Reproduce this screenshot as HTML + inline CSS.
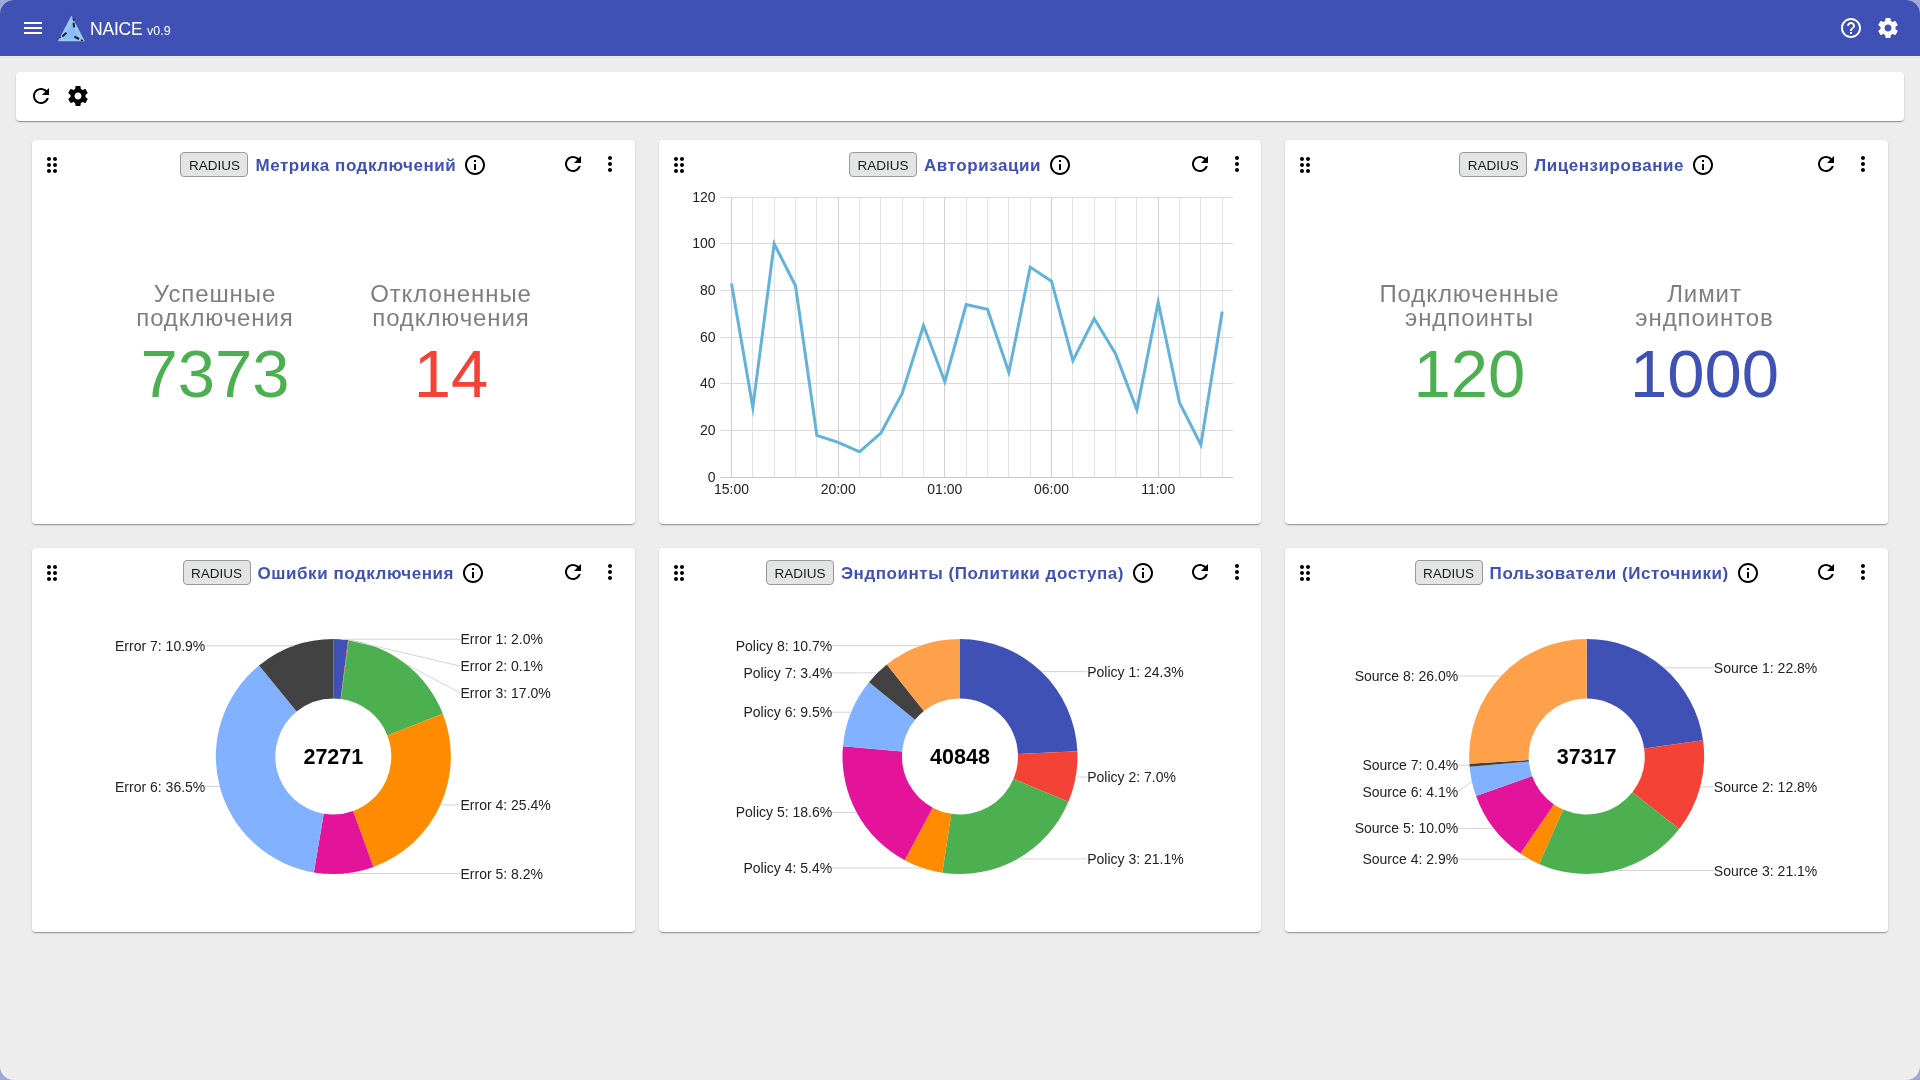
<!DOCTYPE html>
<html><head><meta charset="utf-8"><title>NAICE</title><style>
*{box-sizing:border-box}
html,body{margin:0;padding:0;width:1920px;height:1080px;overflow:hidden;background:#a0a9d6}
.win{position:absolute;left:0;top:0;width:1920px;height:1080px;background:#ededed;will-change:transform;border-radius:14px;overflow:hidden;font-family:"Liberation Sans",sans-serif}
.hdr{position:absolute;left:0;top:0;width:1920px;height:56px;background:#3f51b5}
.ic{position:absolute;display:block}
.t{position:absolute;white-space:nowrap;font-family:"Liberation Sans",sans-serif}
.card{position:absolute;background:#fff;border-radius:4px;box-shadow:0 2px 1px -1px rgba(0,0,0,.2),0 1px 1px 0 rgba(0,0,0,.14),0 1px 3px 0 rgba(0,0,0,.12)}
.hg{position:absolute;height:26px;display:flex;align-items:flex-start;justify-content:center}
.chip{display:inline-block;height:25px;width:68px;text-align:center;line-height:25px;padding:0;border:1px solid #9a9a9a;border-radius:4px;background:#e3e4e4;color:#1a1a1a;font-size:13.5px;flex:none}
.ttl{margin-left:7px;line-height:26px;padding-top:1px;font-weight:700;font-size:17px;letter-spacing:.55px;color:#3f51b5;white-space:nowrap}
.mlab{text-align:center;font-size:24px;line-height:24.3px;color:#7f7f7f;letter-spacing:.9px}
.mnum{text-align:center;font-size:67px;line-height:70px}
.ax{font-family:"Liberation Sans",sans-serif;font-size:14px;fill:#222}
.pl{font-family:"Liberation Sans",sans-serif;font-size:14px;fill:#222}
.pt{font-family:"Liberation Sans",sans-serif;font-size:21.5px;font-weight:700;fill:#000}
</style></head>
<body><div class="win">
<div class="hdr"></div><div style="position:absolute;left:0;top:57px;width:1920px;height:1px;background:repeating-linear-gradient(90deg,#e2e3e3 0 1px,#ececec 1px 2px)"></div>
<svg class="ic" style="left:21px;top:16px;width:24px;height:24px" viewBox="0 0 24 24"><path fill="#fff" d="M3 18h18v-2H3v2zm0-5h18v-2H3v2zm0-7v2h18V6H3z"/></svg>
<svg class="ic" style="left:56px;top:14px;width:31px;height:30px" viewBox="0 0 31 30">
<polygon points="15.4,1.6 28.9,27.2 1.9,27.2" fill="#96c8f2"/>
<polygon points="15.6,9 23.5,25 8,25" fill="#86b6fb" opacity="0.7"/>
<path d="M17.4,4.2 L17.6,6.8" stroke="#1c1c28" stroke-width="1.5"/>
<path d="M17.6,8.6 L18.1,13.4" stroke="#1c1c28" stroke-width="2"/>
<path d="M3.6,23.8 L4.6,22.8" stroke="#1c1c28" stroke-width="1.5"/>
<path d="M6.4,22.4 L10.4,18.8" stroke="#1c1c28" stroke-width="2"/>
<path d="M18.4,22.6 L23,25" stroke="#1c1c28" stroke-width="2"/>
<path d="M24.8,26 L27,26.6" stroke="#1c1c28" stroke-width="1.5"/>
</svg>
<div class="t" style="left:90px;top:19px;font-size:17.5px;letter-spacing:-0.2px;color:#fff;line-height:20px">NAICE</div>
<div class="t" style="left:147px;top:24px;font-size:12.5px;color:#fff;line-height:14px">v0.9</div>
<svg class="ic" style="left:1839px;top:16px;width:24px;height:24px" viewBox="0 0 24 24"><path fill="#fff" d="M11 18h2v-2h-2v2zm1-16C6.48 2 2 6.48 2 12s4.48 10 10 10 10-4.48 10-10S17.52 2 12 2zm0 18c-4.41 0-8-3.59-8-8s3.59-8 8-8 8 3.59 8 8-3.59 8-8 8zm0-14c-2.21 0-4 1.79-4 4h2c0-1.1.9-2 2-2s2 .9 2 2c0 2-3 1.75-3 5h2c0-2.25 3-2.5 3-5 0-2.21-1.79-4-4-4z"/></svg>
<svg class="ic" style="left:1876px;top:16px;width:24px;height:24px" viewBox="0 0 24 24"><path fill="#fff" d="M19.43 12.98c.04-.32.07-.64.07-.98s-.03-.66-.07-.98l2.11-1.65c.19-.15.24-.42.12-.64l-2-3.46c-.12-.22-.39-.3-.61-.22l-2.49 1c-.52-.4-1.08-.73-1.69-.98l-.38-2.65C14.46 2.18 14.25 2 14 2h-4c-.25 0-.46.18-.49.42l-.38 2.650c-.61.25-1.17.59-1.69.98l-2.49-1c-.23-.09-.49 0-.61.22l-2 3.46c-.13.22-.07.49.12.64l2.11 1.65c-.04.32-.07.65-.07.98s.03.66.07.98l-2.11 1.65c-.19.15-.24.42-.12.64l2 3.46c.12.22.39.3.61.22l2.49-1c.52.4 1.08.73 1.69.98l.38 2.65c.03.24.24.42.49.42h4c.25 0 .46-.18.49-.42l.38-2.65c.61-.25 1.17-.59 1.69-.98l2.49 1c.23.09.49 0 .61-.22l2-3.46c.12-.22.07-.49-.12-.64l-2.11-1.65zM12 15.5c-1.93 0-3.5-1.57-3.5-3.5s1.57-3.5 3.5-3.5 3.5 1.57 3.5 3.5-1.57 3.5-3.5 3.5z"/></svg>
<div class="card" style="left:16px;top:72px;width:1888px;height:49px"></div>
<svg class="ic" style="left:29px;top:84px;width:24px;height:24px" viewBox="0 0 24 24"><path fill="#000" d="M17.65 6.35C16.2 4.9 14.21 4 12 4c-4.42 0-7.99 3.58-7.99 8s3.57 8 7.99 8c3.73 0 6.840-2.55 7.73-6h-2.08c-.82 2.33-3.04 4-5.65 4-3.31 0-6-2.69-6-6s2.69-6 6-6c1.66 0 3.14.69 4.22 1.78L13 11h7V4l-2.35 2.35z"/></svg>
<svg class="ic" style="left:66px;top:84px;width:24px;height:24px" viewBox="0 0 24 24"><path fill="#000" d="M19.43 12.98c.04-.32.07-.64.07-.98s-.03-.66-.07-.98l2.11-1.65c.19-.15.24-.42.12-.64l-2-3.46c-.12-.22-.39-.3-.61-.22l-2.49 1c-.52-.4-1.08-.73-1.69-.98l-.38-2.65C14.46 2.18 14.25 2 14 2h-4c-.25 0-.46.18-.49.42l-.38 2.650c-.61.25-1.17.59-1.69.98l-2.49-1c-.23-.09-.49 0-.61.22l-2 3.46c-.13.22-.07.49.12.64l2.11 1.65c-.04.32-.07.65-.07.98s.03.66.07.98l-2.11 1.65c-.19.15-.24.42-.12.64l2 3.46c.12.22.39.3.61.22l2.49-1c.52.4 1.08.73 1.69.98l.38 2.65c.03.24.24.42.49.42h4c.25 0 .46-.18.49-.42l.38-2.65c.61-.25 1.17-.59 1.69-.98l2.49 1c.23.09.49 0 .61-.22l2-3.46c.12-.22.07-.49-.12-.64l-2.11-1.65zM12 15.5c-1.93 0-3.5-1.57-3.5-3.5s1.57-3.5 3.5-3.5 3.5 1.57 3.5 3.5-1.57 3.5-3.5 3.5z"/></svg>
<div class="card" style="left:32.00px;top:140px;width:602.67px;height:384px"></div>
<svg class="ic" style="left:40px;top:153px;width:24px;height:24px" viewBox="0 0 24 24"><path fill="#000" d="M11 18c0 1.1-.9 2-2 2s-2-.9-2-2 .9-2 2-2 2 .9 2 2zm-2-8c-1.1 0-2 .9-2 2s.9 2 2 2 2-.9 2-2-.9-2-2-2zm0-6c-1.1 0-2 .9-2 2s.9 2 2 2 2-.9 2-2-.9-2-2-2zm6 4c1.1 0 2-.9 2-2s-.9-2-2-2-2 .9-2 2 .9 2 2 2zm0 2c-1.1 0-2 .9-2 2s.9 2 2 2 2-.9 2-2-.9-2-2-2zm0 6c-1.1 0-2 .9-2 2s.9 2 2 2 2-.9 2-2-.9-2-2-2z"/></svg>
<svg class="ic" style="left:560.9966666666667px;top:152px;width:24px;height:24px" viewBox="0 0 24 24"><path fill="#000" d="M17.65 6.35C16.2 4.9 14.21 4 12 4c-4.42 0-7.99 3.58-7.99 8s3.57 8 7.99 8c3.73 0 6.840-2.55 7.73-6h-2.08c-.82 2.33-3.04 4-5.65 4-3.31 0-6-2.69-6-6s2.69-6 6-6c1.66 0 3.14.69 4.22 1.78L13 11h7V4l-2.35 2.35z"/></svg>
<svg class="ic" style="left:597.9966666666667px;top:152px;width:24px;height:24px" viewBox="0 0 24 24"><path fill="#000" d="M12 8c1.1 0 2-.9 2-2s-.9-2-2-2-2 .9-2 2 .9 2 2 2zm0 2c-1.1 0-2 .9-2 2s.9 2 2 2 2-.9 2-2-.9-2-2-2zm0 6c-1.1 0-2 .9-2 2s.9 2 2 2 2-.9 2-2-.9-2-2-2z"/></svg>
<div class="hg" style="left:32.50px;top:152px;width:602.67px"><span class="chip">RADIUS</span><span class="ttl">Метрика подключений</span><svg style="width:24px;height:24px;margin-left:7px;margin-top:1px;flex:none" viewBox="0 0 24 24"><path d="M11 7h2v2h-2zm0 4h2v6h-2zm1-9C6.48 2 2 6.48 2 12s4.48 10 10 10 10-4.48 10-10S17.52 2 12 2zm0 18c-4.41 0-8-3.59-8-8s3.59-8 8-8 8 3.59 8 8-3.59 8-8 8z"/></svg></div>
<div class="card" style="left:658.67px;top:140px;width:602.67px;height:384px"></div>
<svg class="ic" style="left:666.6666666666666px;top:153px;width:24px;height:24px" viewBox="0 0 24 24"><path fill="#000" d="M11 18c0 1.1-.9 2-2 2s-2-.9-2-2 .9-2 2-2 2 .9 2 2zm-2-8c-1.1 0-2 .9-2 2s.9 2 2 2 2-.9 2-2-.9-2-2-2zm0-6c-1.1 0-2 .9-2 2s.9 2 2 2 2-.9 2-2-.9-2-2-2zm6 4c1.1 0 2-.9 2-2s-.9-2-2-2-2 .9-2 2 .9 2 2 2zm0 2c-1.1 0-2 .9-2 2s.9 2 2 2 2-.9 2-2-.9-2-2-2zm0 6c-1.1 0-2 .9-2 2s.9 2 2 2 2-.9 2-2-.9-2-2-2z"/></svg>
<svg class="ic" style="left:1187.6633333333332px;top:152px;width:24px;height:24px" viewBox="0 0 24 24"><path fill="#000" d="M17.65 6.35C16.2 4.9 14.21 4 12 4c-4.42 0-7.99 3.58-7.99 8s3.57 8 7.99 8c3.73 0 6.840-2.55 7.73-6h-2.08c-.82 2.33-3.04 4-5.65 4-3.31 0-6-2.69-6-6s2.69-6 6-6c1.66 0 3.14.69 4.22 1.78L13 11h7V4l-2.35 2.35z"/></svg>
<svg class="ic" style="left:1224.6633333333332px;top:152px;width:24px;height:24px" viewBox="0 0 24 24"><path fill="#000" d="M12 8c1.1 0 2-.9 2-2s-.9-2-2-2-2 .9-2 2 .9 2 2 2zm0 2c-1.1 0-2 .9-2 2s.9 2 2 2 2-.9 2-2-.9-2-2-2zm0 6c-1.1 0-2 .9-2 2s.9 2 2 2 2-.9 2-2-.9-2-2-2z"/></svg>
<div class="hg" style="left:659.17px;top:152px;width:602.67px"><span class="chip">RADIUS</span><span class="ttl">Авторизации</span><svg style="width:24px;height:24px;margin-left:7px;margin-top:1px;flex:none" viewBox="0 0 24 24"><path d="M11 7h2v2h-2zm0 4h2v6h-2zm1-9C6.48 2 2 6.48 2 12s4.48 10 10 10 10-4.48 10-10S17.52 2 12 2zm0 18c-4.41 0-8-3.59-8-8s3.59-8 8-8 8 3.59 8 8-3.59 8-8 8z"/></svg></div>
<div class="card" style="left:1285.33px;top:140px;width:602.67px;height:384px"></div>
<svg class="ic" style="left:1293.3333333333333px;top:153px;width:24px;height:24px" viewBox="0 0 24 24"><path fill="#000" d="M11 18c0 1.1-.9 2-2 2s-2-.9-2-2 .9-2 2-2 2 .9 2 2zm-2-8c-1.1 0-2 .9-2 2s.9 2 2 2 2-.9 2-2-.9-2-2-2zm0-6c-1.1 0-2 .9-2 2s.9 2 2 2 2-.9 2-2-.9-2-2-2zm6 4c1.1 0 2-.9 2-2s-.9-2-2-2-2 .9-2 2 .9 2 2 2zm0 2c-1.1 0-2 .9-2 2s.9 2 2 2 2-.9 2-2-.9-2-2-2zm0 6c-1.1 0-2 .9-2 2s.9 2 2 2 2-.9 2-2-.9-2-2-2z"/></svg>
<svg class="ic" style="left:1814.33px;top:152px;width:24px;height:24px" viewBox="0 0 24 24"><path fill="#000" d="M17.65 6.35C16.2 4.9 14.21 4 12 4c-4.42 0-7.99 3.58-7.99 8s3.57 8 7.99 8c3.73 0 6.840-2.55 7.73-6h-2.08c-.82 2.33-3.04 4-5.65 4-3.31 0-6-2.69-6-6s2.69-6 6-6c1.66 0 3.14.69 4.22 1.78L13 11h7V4l-2.35 2.35z"/></svg>
<svg class="ic" style="left:1851.33px;top:152px;width:24px;height:24px" viewBox="0 0 24 24"><path fill="#000" d="M12 8c1.1 0 2-.9 2-2s-.9-2-2-2-2 .9-2 2 .9 2 2 2zm0 2c-1.1 0-2 .9-2 2s.9 2 2 2 2-.9 2-2-.9-2-2-2zm0 6c-1.1 0-2 .9-2 2s.9 2 2 2 2-.9 2-2-.9-2-2-2z"/></svg>
<div class="hg" style="left:1285.83px;top:152px;width:602.67px"><span class="chip">RADIUS</span><span class="ttl">Лицензирование</span><svg style="width:24px;height:24px;margin-left:7px;margin-top:1px;flex:none" viewBox="0 0 24 24"><path d="M11 7h2v2h-2zm0 4h2v6h-2zm1-9C6.48 2 2 6.48 2 12s4.48 10 10 10 10-4.48 10-10S17.52 2 12 2zm0 18c-4.41 0-8-3.59-8-8s3.59-8 8-8 8 3.59 8 8-3.59 8-8 8z"/></svg></div>
<div class="card" style="left:32.00px;top:548px;width:602.67px;height:384px"></div>
<svg class="ic" style="left:40px;top:561px;width:24px;height:24px" viewBox="0 0 24 24"><path fill="#000" d="M11 18c0 1.1-.9 2-2 2s-2-.9-2-2 .9-2 2-2 2 .9 2 2zm-2-8c-1.1 0-2 .9-2 2s.9 2 2 2 2-.9 2-2-.9-2-2-2zm0-6c-1.1 0-2 .9-2 2s.9 2 2 2 2-.9 2-2-.9-2-2-2zm6 4c1.1 0 2-.9 2-2s-.9-2-2-2-2 .9-2 2 .9 2 2 2zm0 2c-1.1 0-2 .9-2 2s.9 2 2 2 2-.9 2-2-.9-2-2-2zm0 6c-1.1 0-2 .9-2 2s.9 2 2 2 2-.9 2-2-.9-2-2-2z"/></svg>
<svg class="ic" style="left:560.9966666666667px;top:560px;width:24px;height:24px" viewBox="0 0 24 24"><path fill="#000" d="M17.65 6.35C16.2 4.9 14.21 4 12 4c-4.42 0-7.99 3.58-7.99 8s3.57 8 7.99 8c3.73 0 6.840-2.55 7.73-6h-2.08c-.82 2.33-3.04 4-5.65 4-3.31 0-6-2.69-6-6s2.69-6 6-6c1.66 0 3.14.69 4.22 1.78L13 11h7V4l-2.35 2.35z"/></svg>
<svg class="ic" style="left:597.9966666666667px;top:560px;width:24px;height:24px" viewBox="0 0 24 24"><path fill="#000" d="M12 8c1.1 0 2-.9 2-2s-.9-2-2-2-2 .9-2 2 .9 2 2 2zm0 2c-1.1 0-2 .9-2 2s.9 2 2 2 2-.9 2-2-.9-2-2-2zm0 6c-1.1 0-2 .9-2 2s.9 2 2 2 2-.9 2-2-.9-2-2-2z"/></svg>
<div class="hg" style="left:32.50px;top:560px;width:602.67px"><span class="chip">RADIUS</span><span class="ttl">Ошибки подключения</span><svg style="width:24px;height:24px;margin-left:7px;margin-top:1px;flex:none" viewBox="0 0 24 24"><path d="M11 7h2v2h-2zm0 4h2v6h-2zm1-9C6.48 2 2 6.48 2 12s4.48 10 10 10 10-4.48 10-10S17.52 2 12 2zm0 18c-4.41 0-8-3.59-8-8s3.59-8 8-8 8 3.59 8 8-3.59 8-8 8z"/></svg></div>
<div class="card" style="left:658.67px;top:548px;width:602.67px;height:384px"></div>
<svg class="ic" style="left:666.6666666666666px;top:561px;width:24px;height:24px" viewBox="0 0 24 24"><path fill="#000" d="M11 18c0 1.1-.9 2-2 2s-2-.9-2-2 .9-2 2-2 2 .9 2 2zm-2-8c-1.1 0-2 .9-2 2s.9 2 2 2 2-.9 2-2-.9-2-2-2zm0-6c-1.1 0-2 .9-2 2s.9 2 2 2 2-.9 2-2-.9-2-2-2zm6 4c1.1 0 2-.9 2-2s-.9-2-2-2-2 .9-2 2 .9 2 2 2zm0 2c-1.1 0-2 .9-2 2s.9 2 2 2 2-.9 2-2-.9-2-2-2zm0 6c-1.1 0-2 .9-2 2s.9 2 2 2 2-.9 2-2-.9-2-2-2z"/></svg>
<svg class="ic" style="left:1187.6633333333332px;top:560px;width:24px;height:24px" viewBox="0 0 24 24"><path fill="#000" d="M17.65 6.35C16.2 4.9 14.21 4 12 4c-4.42 0-7.99 3.58-7.99 8s3.57 8 7.99 8c3.73 0 6.840-2.55 7.73-6h-2.08c-.82 2.33-3.04 4-5.65 4-3.31 0-6-2.69-6-6s2.69-6 6-6c1.66 0 3.14.69 4.22 1.78L13 11h7V4l-2.35 2.35z"/></svg>
<svg class="ic" style="left:1224.6633333333332px;top:560px;width:24px;height:24px" viewBox="0 0 24 24"><path fill="#000" d="M12 8c1.1 0 2-.9 2-2s-.9-2-2-2-2 .9-2 2 .9 2 2 2zm0 2c-1.1 0-2 .9-2 2s.9 2 2 2 2-.9 2-2-.9-2-2-2zm0 6c-1.1 0-2 .9-2 2s.9 2 2 2 2-.9 2-2-.9-2-2-2z"/></svg>
<div class="hg" style="left:659.17px;top:560px;width:602.67px"><span class="chip">RADIUS</span><span class="ttl">Эндпоинты (Политики доступа)</span><svg style="width:24px;height:24px;margin-left:7px;margin-top:1px;flex:none" viewBox="0 0 24 24"><path d="M11 7h2v2h-2zm0 4h2v6h-2zm1-9C6.48 2 2 6.48 2 12s4.48 10 10 10 10-4.48 10-10S17.52 2 12 2zm0 18c-4.41 0-8-3.59-8-8s3.59-8 8-8 8 3.59 8 8-3.59 8-8 8z"/></svg></div>
<div class="card" style="left:1285.33px;top:548px;width:602.67px;height:384px"></div>
<svg class="ic" style="left:1293.3333333333333px;top:561px;width:24px;height:24px" viewBox="0 0 24 24"><path fill="#000" d="M11 18c0 1.1-.9 2-2 2s-2-.9-2-2 .9-2 2-2 2 .9 2 2zm-2-8c-1.1 0-2 .9-2 2s.9 2 2 2 2-.9 2-2-.9-2-2-2zm0-6c-1.1 0-2 .9-2 2s.9 2 2 2 2-.9 2-2-.9-2-2-2zm6 4c1.1 0 2-.9 2-2s-.9-2-2-2-2 .9-2 2 .9 2 2 2zm0 2c-1.1 0-2 .9-2 2s.9 2 2 2 2-.9 2-2-.9-2-2-2zm0 6c-1.1 0-2 .9-2 2s.9 2 2 2 2-.9 2-2-.9-2-2-2z"/></svg>
<svg class="ic" style="left:1814.33px;top:560px;width:24px;height:24px" viewBox="0 0 24 24"><path fill="#000" d="M17.65 6.35C16.2 4.9 14.21 4 12 4c-4.42 0-7.99 3.58-7.99 8s3.57 8 7.99 8c3.73 0 6.840-2.55 7.73-6h-2.08c-.82 2.33-3.04 4-5.65 4-3.31 0-6-2.69-6-6s2.69-6 6-6c1.66 0 3.14.69 4.22 1.78L13 11h7V4l-2.35 2.35z"/></svg>
<svg class="ic" style="left:1851.33px;top:560px;width:24px;height:24px" viewBox="0 0 24 24"><path fill="#000" d="M12 8c1.1 0 2-.9 2-2s-.9-2-2-2-2 .9-2 2 .9 2 2 2zm0 2c-1.1 0-2 .9-2 2s.9 2 2 2 2-.9 2-2-.9-2-2-2zm0 6c-1.1 0-2 .9-2 2s.9 2 2 2 2-.9 2-2-.9-2-2-2z"/></svg>
<div class="hg" style="left:1285.83px;top:560px;width:602.67px"><span class="chip">RADIUS</span><span class="ttl">Пользователи (Источники)</span><svg style="width:24px;height:24px;margin-left:7px;margin-top:1px;flex:none" viewBox="0 0 24 24"><path d="M11 7h2v2h-2zm0 4h2v6h-2zm1-9C6.48 2 2 6.48 2 12s4.48 10 10 10 10-4.48 10-10S17.52 2 12 2zm0 18c-4.41 0-8-3.59-8-8s3.59-8 8-8 8 3.59 8 8-3.59 8-8 8z"/></svg></div>
<div class="t mlab" style="left:65px;top:282px;width:300px">Успешные<br>подключения</div>
<div class="t mnum" style="left:65px;top:339px;width:300px;color:#4caf50">7373</div>
<div class="t mlab" style="left:301px;top:282px;width:300px">Отклоненные<br>подключения</div>
<div class="t mnum" style="left:301px;top:339px;width:300px;color:#f44336">14</div>
<div class="t mlab" style="left:1319.5px;top:282px;width:300px">Подключенные<br>эндпоинты</div>
<div class="t mnum" style="left:1319.5px;top:339px;width:300px;color:#4caf50">120</div>
<div class="t mlab" style="left:1554.5px;top:282px;width:300px">Лимит<br>эндпоинтов</div>
<div class="t mnum" style="left:1554.5px;top:339px;width:300px;color:#3f51b5">1000</div>
<svg class="ic" style="left:0;top:0;width:1920px;height:1080px" viewBox="0 0 1920 1080">
<line x1="731.50" y1="197.0" x2="731.50" y2="477.5" stroke="#cfcfd6" stroke-width="1"/>
<line x1="752.50" y1="197.0" x2="752.50" y2="477.5" stroke="#e4e4e8" stroke-width="1"/>
<line x1="774.50" y1="197.0" x2="774.50" y2="477.5" stroke="#e4e4e8" stroke-width="1"/>
<line x1="795.50" y1="197.0" x2="795.50" y2="477.5" stroke="#e4e4e8" stroke-width="1"/>
<line x1="816.50" y1="197.0" x2="816.50" y2="477.5" stroke="#e4e4e8" stroke-width="1"/>
<line x1="838.50" y1="197.0" x2="838.50" y2="477.5" stroke="#cfcfd6" stroke-width="1"/>
<line x1="859.50" y1="197.0" x2="859.50" y2="477.5" stroke="#e4e4e8" stroke-width="1"/>
<line x1="880.50" y1="197.0" x2="880.50" y2="477.5" stroke="#e4e4e8" stroke-width="1"/>
<line x1="902.50" y1="197.0" x2="902.50" y2="477.5" stroke="#e4e4e8" stroke-width="1"/>
<line x1="923.50" y1="197.0" x2="923.50" y2="477.5" stroke="#e4e4e8" stroke-width="1"/>
<line x1="944.50" y1="197.0" x2="944.50" y2="477.5" stroke="#cfcfd6" stroke-width="1"/>
<line x1="966.50" y1="197.0" x2="966.50" y2="477.5" stroke="#e4e4e8" stroke-width="1"/>
<line x1="987.50" y1="197.0" x2="987.50" y2="477.5" stroke="#e4e4e8" stroke-width="1"/>
<line x1="1008.50" y1="197.0" x2="1008.50" y2="477.5" stroke="#e4e4e8" stroke-width="1"/>
<line x1="1030.50" y1="197.0" x2="1030.50" y2="477.5" stroke="#e4e4e8" stroke-width="1"/>
<line x1="1051.50" y1="197.0" x2="1051.50" y2="477.5" stroke="#cfcfd6" stroke-width="1"/>
<line x1="1072.50" y1="197.0" x2="1072.50" y2="477.5" stroke="#e4e4e8" stroke-width="1"/>
<line x1="1094.50" y1="197.0" x2="1094.50" y2="477.5" stroke="#e4e4e8" stroke-width="1"/>
<line x1="1115.50" y1="197.0" x2="1115.50" y2="477.5" stroke="#e4e4e8" stroke-width="1"/>
<line x1="1136.50" y1="197.0" x2="1136.50" y2="477.5" stroke="#e4e4e8" stroke-width="1"/>
<line x1="1158.50" y1="197.0" x2="1158.50" y2="477.5" stroke="#cfcfd6" stroke-width="1"/>
<line x1="1179.50" y1="197.0" x2="1179.50" y2="477.5" stroke="#e4e4e8" stroke-width="1"/>
<line x1="1200.50" y1="197.0" x2="1200.50" y2="477.5" stroke="#e4e4e8" stroke-width="1"/>
<line x1="1222.50" y1="197.0" x2="1222.50" y2="477.5" stroke="#e4e4e8" stroke-width="1"/>
<line x1="720.5" y1="477.50" x2="1233" y2="477.50" stroke="#c6c6d4" stroke-width="1"/>
<text x="715.5" y="482.00" text-anchor="end" class="ax">0</text>
<line x1="720.5" y1="430.50" x2="1233" y2="430.50" stroke="#d8d8df" stroke-width="1"/>
<text x="715.5" y="435.00" text-anchor="end" class="ax">20</text>
<line x1="720.5" y1="383.50" x2="1233" y2="383.50" stroke="#d8d8df" stroke-width="1"/>
<text x="715.5" y="388.00" text-anchor="end" class="ax">40</text>
<line x1="720.5" y1="337.50" x2="1233" y2="337.50" stroke="#d8d8df" stroke-width="1"/>
<text x="715.5" y="342.00" text-anchor="end" class="ax">60</text>
<line x1="720.5" y1="290.50" x2="1233" y2="290.50" stroke="#d8d8df" stroke-width="1"/>
<text x="715.5" y="295.00" text-anchor="end" class="ax">80</text>
<line x1="720.5" y1="243.50" x2="1233" y2="243.50" stroke="#d8d8df" stroke-width="1"/>
<text x="715.5" y="248.00" text-anchor="end" class="ax">100</text>
<line x1="720.5" y1="197.50" x2="1233" y2="197.50" stroke="#d8d8df" stroke-width="1"/>
<text x="715.5" y="202.00" text-anchor="end" class="ax">120</text>
<text x="731.50" y="493.7" text-anchor="middle" class="ax">15:00</text>
<text x="838.17" y="493.7" text-anchor="middle" class="ax">20:00</text>
<text x="944.85" y="493.7" text-anchor="middle" class="ax">01:00</text>
<text x="1051.52" y="493.7" text-anchor="middle" class="ax">06:00</text>
<text x="1158.20" y="493.7" text-anchor="middle" class="ax">11:00</text>
<polyline points="731.50,283.49 752.83,407.38 774.17,243.75 795.50,285.82 816.84,435.43 838.17,442.44 859.51,451.79 880.84,433.09 902.18,393.35 923.51,325.56 944.85,381.66 966.18,304.52 987.52,309.20 1008.85,372.31 1030.19,267.12 1051.52,281.15 1072.86,360.62 1094.19,318.55 1115.53,353.61 1136.86,409.71 1158.20,302.19 1179.53,402.70 1200.87,444.77 1222.20,311.54" fill="none" stroke="#63b2d9" stroke-width="3" stroke-linejoin="miter" stroke-miterlimit="30"/>
<path d="M333.33,639.00 A117.5,117.5 0 0 1 348.04,639.92 L340.59,698.96 A58,58 0 0 0 333.33,698.50 Z" fill="#3f51b5"/>
<path d="M348.04,639.92 A117.5,117.5 0 0 1 348.77,640.02 L340.95,699.00 A58,58 0 0 0 340.59,698.96 Z" fill="#f44336"/>
<path d="M348.77,640.02 A117.5,117.5 0 0 1 442.80,713.80 L387.36,735.42 A58,58 0 0 0 340.95,699.00 Z" fill="#4caf50"/>
<path d="M442.80,713.80 A117.5,117.5 0 0 1 373.44,866.94 L353.13,811.02 A58,58 0 0 0 387.36,735.42 Z" fill="#ff8c00"/>
<path d="M373.44,866.94 A117.5,117.5 0 0 1 313.88,872.38 L323.73,813.70 A58,58 0 0 0 353.13,811.02 Z" fill="#e3139a"/>
<path d="M313.88,872.38 A117.5,117.5 0 0 1 259.07,665.45 L296.67,711.55 A58,58 0 0 0 323.73,813.70 Z" fill="#82b1ff"/>
<path d="M259.07,665.45 A117.5,117.5 0 0 1 333.33,639.00 L333.33,698.50 A58,58 0 0 0 296.67,711.55 Z" fill="#424242"/>
<line x1="340.70" y1="639.23" x2="460.5" y2="639.23" stroke="#d4d4d4" stroke-width="1"/>
<text x="460.5" y="644.23" text-anchor="start" class="pl">Error 1: 2.0%</text>
<line x1="348.41" y1="639.97" x2="460.5" y2="666.10" stroke="#d4d4d4" stroke-width="1"/>
<text x="460.5" y="671.10" text-anchor="start" class="pl">Error 2: 0.1%</text>
<line x1="405.87" y1="664.06" x2="460.5" y2="693.00" stroke="#d4d4d4" stroke-width="1"/>
<text x="460.5" y="698.00" text-anchor="start" class="pl">Error 3: 17.0%</text>
<line x1="440.36" y1="804.98" x2="460.5" y2="804.98" stroke="#d4d4d4" stroke-width="1"/>
<text x="460.5" y="809.98" text-anchor="start" class="pl">Error 4: 25.4%</text>
<line x1="344.01" y1="873.51" x2="460.5" y2="873.51" stroke="#d4d4d4" stroke-width="1"/>
<text x="460.5" y="878.51" text-anchor="start" class="pl">Error 5: 8.2%</text>
<line x1="219.75" y1="786.58" x2="205.3" y2="786.58" stroke="#d4d4d4" stroke-width="1"/>
<text x="205.3" y="791.58" text-anchor="end" class="pl">Error 6: 36.5%</text>
<line x1="293.91" y1="645.81" x2="205.3" y2="645.81" stroke="#d4d4d4" stroke-width="1"/>
<text x="205.3" y="650.81" text-anchor="end" class="pl">Error 7: 10.9%</text>
<text x="333.33" y="763.50" text-anchor="middle" class="pt">27271</text>
<path d="M960.00,639.00 A117.5,117.5 0 0 1 1077.39,751.33 L1017.94,753.95 A58,58 0 0 0 960.00,698.50 Z" fill="#3f51b5"/>
<path d="M1077.39,751.33 A117.5,117.5 0 0 1 1068.41,801.81 L1013.52,778.86 A58,58 0 0 0 1017.94,753.95 Z" fill="#f44336"/>
<path d="M1068.41,801.81 A117.5,117.5 0 0 1 942.35,872.67 L951.29,813.84 A58,58 0 0 0 1013.52,778.86 Z" fill="#4caf50"/>
<path d="M942.35,872.67 A117.5,117.5 0 0 1 904.69,860.17 L932.70,807.67 A58,58 0 0 0 951.29,813.84 Z" fill="#ff8c00"/>
<path d="M904.69,860.17 A117.5,117.5 0 0 1 842.95,746.18 L902.22,751.40 A58,58 0 0 0 932.70,807.67 Z" fill="#e3139a"/>
<path d="M842.95,746.18 A117.5,117.5 0 0 1 869.00,682.17 L915.08,719.81 A58,58 0 0 0 902.22,751.40 Z" fill="#82b1ff"/>
<path d="M869.00,682.17 A117.5,117.5 0 0 1 886.82,664.57 L923.88,711.12 A58,58 0 0 0 915.08,719.81 Z" fill="#424242"/>
<path d="M886.82,664.57 A117.5,117.5 0 0 1 960.00,639.00 L960.00,698.50 A58,58 0 0 0 923.88,711.12 Z" fill="#ffa14a"/>
<line x1="1041.24" y1="671.61" x2="1087.2" y2="671.61" stroke="#d4d4d4" stroke-width="1"/>
<text x="1087.2" y="676.61" text-anchor="start" class="pl">Policy 1: 24.3%</text>
<line x1="1075.69" y1="777.07" x2="1087.2" y2="777.07" stroke="#d4d4d4" stroke-width="1"/>
<text x="1087.2" y="782.07" text-anchor="start" class="pl">Policy 2: 7.0%</text>
<line x1="1017.57" y1="858.93" x2="1087.2" y2="858.93" stroke="#d4d4d4" stroke-width="1"/>
<text x="1087.2" y="863.93" text-anchor="start" class="pl">Policy 3: 21.1%</text>
<line x1="922.99" y1="868.02" x2="832.2" y2="868.02" stroke="#d4d4d4" stroke-width="1"/>
<text x="832.2" y="873.02" text-anchor="end" class="pl">Policy 4: 5.4%</text>
<line x1="856.68" y1="812.46" x2="832.2" y2="812.46" stroke="#d4d4d4" stroke-width="1"/>
<text x="832.2" y="817.46" text-anchor="end" class="pl">Policy 5: 18.6%</text>
<line x1="851.16" y1="712.22" x2="832.2" y2="712.22" stroke="#d4d4d4" stroke-width="1"/>
<text x="832.2" y="717.22" text-anchor="end" class="pl">Policy 6: 9.5%</text>
<line x1="877.44" y1="672.89" x2="832.2" y2="672.89" stroke="#d4d4d4" stroke-width="1"/>
<text x="832.2" y="677.89" text-anchor="end" class="pl">Policy 7: 3.4%</text>
<line x1="921.24" y1="645.58" x2="832.2" y2="645.58" stroke="#d4d4d4" stroke-width="1"/>
<text x="832.2" y="650.58" text-anchor="end" class="pl">Policy 8: 10.7%</text>
<text x="960.00" y="763.50" text-anchor="middle" class="pt">40848</text>
<path d="M1586.67,639.00 A117.5,117.5 0 0 1 1703.03,740.14 L1644.11,748.43 A58,58 0 0 0 1586.67,698.50 Z" fill="#3f51b5"/>
<path d="M1703.03,740.14 A117.5,117.5 0 0 1 1679.22,828.89 L1632.35,792.23 A58,58 0 0 0 1644.11,748.43 Z" fill="#f44336"/>
<path d="M1679.22,828.89 A117.5,117.5 0 0 1 1539.04,863.91 L1563.16,809.52 A58,58 0 0 0 1632.35,792.23 Z" fill="#4caf50"/>
<path d="M1539.04,863.91 A117.5,117.5 0 0 1 1520.38,853.51 L1553.95,804.39 A58,58 0 0 0 1563.16,809.52 Z" fill="#ff8c00"/>
<path d="M1520.38,853.51 A117.5,117.5 0 0 1 1476.04,796.09 L1532.06,776.04 A58,58 0 0 0 1553.95,804.39 Z" fill="#e3139a"/>
<path d="M1476.04,796.09 A117.5,117.5 0 0 1 1469.61,766.63 L1528.89,761.50 A58,58 0 0 0 1532.06,776.04 Z" fill="#82b1ff"/>
<path d="M1469.61,766.63 A117.5,117.5 0 0 1 1469.39,763.69 L1528.78,760.05 A58,58 0 0 0 1528.89,761.50 Z" fill="#424242"/>
<path d="M1469.39,763.69 A117.5,117.5 0 0 1 1586.67,639.00 L1586.67,698.50 A58,58 0 0 0 1528.78,760.05 Z" fill="#ffa14a"/>
<line x1="1663.76" y1="667.82" x2="1713.8" y2="667.82" stroke="#d4d4d4" stroke-width="1"/>
<text x="1713.8" y="672.82" text-anchor="start" class="pl">Source 1: 22.8%</text>
<line x1="1700.16" y1="786.94" x2="1713.8" y2="786.94" stroke="#d4d4d4" stroke-width="1"/>
<text x="1713.8" y="791.94" text-anchor="start" class="pl">Source 2: 12.8%</text>
<line x1="1615.15" y1="870.50" x2="1713.8" y2="870.50" stroke="#d4d4d4" stroke-width="1"/>
<text x="1713.8" y="875.50" text-anchor="start" class="pl">Source 3: 21.1%</text>
<line x1="1529.47" y1="859.14" x2="1458.2" y2="859.14" stroke="#d4d4d4" stroke-width="1"/>
<text x="1458.2" y="864.14" text-anchor="end" class="pl">Source 4: 2.9%</text>
<line x1="1493.67" y1="828.31" x2="1458.2" y2="828.31" stroke="#d4d4d4" stroke-width="1"/>
<text x="1458.2" y="833.31" text-anchor="end" class="pl">Source 5: 10.0%</text>
<line x1="1471.87" y1="781.57" x2="1458.2" y2="791.70" stroke="#d4d4d4" stroke-width="1"/>
<text x="1458.2" y="796.70" text-anchor="end" class="pl">Source 6: 4.1%</text>
<line x1="1469.49" y1="765.16" x2="1458.2" y2="765.16" stroke="#d4d4d4" stroke-width="1"/>
<text x="1458.2" y="770.16" text-anchor="end" class="pl">Source 7: 0.4%</text>
<line x1="1501.08" y1="676.00" x2="1458.2" y2="676.00" stroke="#d4d4d4" stroke-width="1"/>
<text x="1458.2" y="681.00" text-anchor="end" class="pl">Source 8: 26.0%</text>
<text x="1586.67" y="763.50" text-anchor="middle" class="pt">37317</text>
</svg>
</div></body></html>
